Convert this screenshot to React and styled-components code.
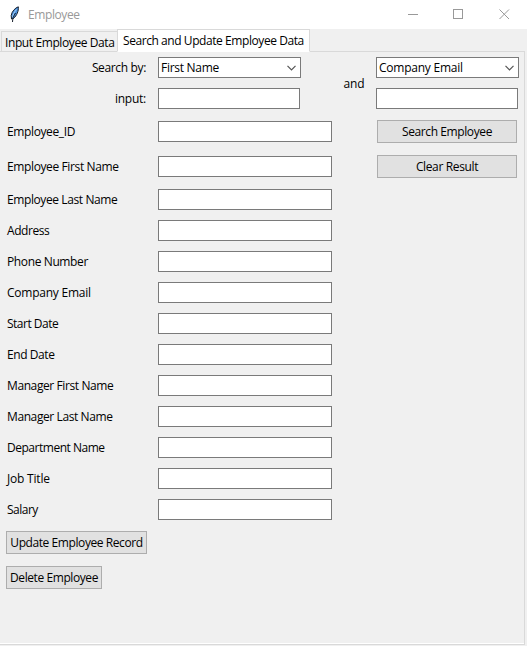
import React from "react";
import styled, { createGlobalStyle } from "styled-components";

const GlobalStyle = createGlobalStyle`
  * { box-sizing: border-box; }
  body {
    margin: 0;
    background: #f0f0f0;
    color: #000;
    font: 12px/16px "Open Sans", "Noto Sans", sans-serif;
    letter-spacing: -0.2px;
  }
`;

const Window = styled.div`
  display: flex;
  flex-direction: column;
  width: 527px;
  height: 646px;
  background: #f0f0f0;
  overflow: hidden;
`;

const TitleBar = styled.header`
  display: flex;
  align-items: center;
  flex: 0 0 29px;
  padding-left: 8px;
  background: #fff;
`;

const Title = styled.span`
  flex: 1;
  margin-left: 7px;
  color: #999;
  letter-spacing: ${(p) => p.$tracking || 0}px;
`;

const WindowControls = styled.div`
  display: flex;
  height: 26px;
`;

const ControlButton = styled.button`
  display: flex;
  align-items: center;
  justify-content: center;
  width: 45.5px;
  padding: 0;
  border: 0;
  background: transparent;
`;

const TabStrip = styled.nav`
  display: flex;
  align-items: flex-end;
  flex: 0 0 23px;
  padding-left: 1px;
  box-shadow: inset -2px 0 #f0f0f0, inset 0 -1px #d9d9d9;
`;

const Tab = styled.button`
  width: ${(p) => p.$width}px;
  height: ${(p) => (p.$active ? 23 : 21)}px;
  padding: ${(p) => (p.$active ? "0 0 0 5px" : "2px 0 0 3px")};
  border: 1px solid #d9d9d9;
  border-bottom-color: ${(p) => (p.$active ? "#fff" : "#d9d9d9")};
  border-right-width: ${(p) => (p.$active ? 1 : 0)}px;
  background: ${(p) => (p.$active ? "#fff" : "#f0f0f0")};
  color: inherit;
  font: inherit;
  letter-spacing: ${(p) => p.$tracking}px;
  text-align: left;
  white-space: nowrap;
`;

const Pane = styled.main`
  width: 525px;
  height: 593px;
  flex: none;
  border-right: 1px solid #d9d9d9;
  border-bottom: 1px solid #d9d9d9;
  box-shadow: inset 0 -1px #fff;
`;

const Form = styled.form`
  display: grid;
  grid-template-columns: 158px 174px 44px 148px;
  grid-template-rows: 31px 31px 35px 35px repeat(11, 31px) 35px 35px;
  align-items: center;
`;

const Label = styled.label`
  grid-column: 1;
  grid-row: ${(p) => p.$row};
  padding: 0 12px 0 7px;
  text-align: ${(p) => (p.$right ? "right" : "left")};
  letter-spacing: ${(p) => p.$tracking}px;
  white-space: nowrap;
`;

const Joiner = styled.span`
  grid-column: 3;
  grid-row: 1 / span 2;
  padding-top: 1px;
  text-align: center;
`;

const Entry = styled.input`
  grid-column: ${(p) => p.$col || 2};
  grid-row: ${(p) => p.$row};
  width: ${(p) => p.$width || 174}px;
  height: 21px;
  padding: 0 2px;
  border: 1px solid #7a7a7a;
  border-radius: 0;
  outline: 0;
  background: #fff;
  font: inherit;
`;

const Combo = styled.div`
  grid-column: ${(p) => p.$col};
  grid-row: 1;
  display: flex;
  align-items: center;
  justify-content: space-between;
  width: 143px;
  height: 21px;
  padding: 0 4px 0 2px;
  border: 1px solid #7a7a7a;
  background: #fff;
  letter-spacing: ${(p) => p.$tracking}px;
`;

const Button = styled.button`
  grid-column: ${(p) => p.$col || 1};
  grid-row: ${(p) => p.$row};
  width: ${(p) => p.$width}px;
  height: 23px;
  margin-left: ${(p) => (p.$col ? 1 : 6)}px;
  padding: 0;
  border: 1px solid #adadad;
  background: #e1e1e1;
  color: inherit;
  font: inherit;
  letter-spacing: ${(p) => p.$tracking}px;
  white-space: nowrap;
`;

const Feather = () => (
  <svg width="13" height="18" viewBox="0 0 13 18">
    <path d="M10.300 .8 C7 2 3.800 5.500 3.200 9.500 L3.500 13 L5.500 12.500 C8.800 9.500 10.800 5 10.300 .8Z" fill="#4a90dc" stroke="#18202c" strokeWidth="1" />
    <path d="M8.500 3.500 C6.300 6 5 8.500 4.700 11" fill="none" stroke="#a5d0f8" strokeWidth="1" />
    <path d="M7.500 7 C5.500 10 4.500 13 4.500 16" fill="none" stroke="#18202c" strokeWidth="1" />
  </svg>
);

const Chevron = () => (
  <svg width="9" height="6" viewBox="0 0 9 6">
    <path d="M.5 .8 4.500 4.800 8.500 .8" fill="none" stroke="#555" strokeWidth="1.2" />
  </svg>
);

const fields = [
  ["Employee_ID", -0.38],
  ["Employee First Name", -0.38],
  ["Employee Last Name", -0.4],
  ["Address", -0.42],
  ["Phone Number", -0.38],
  ["Company Email", -0.24],
  ["Start Date", -0.5],
  ["End Date", -0.42],
  ["Manager First Name", -0.4],
  ["Manager Last Name", -0.4],
  ["Department Name", -0.48],
  ["Job Title", -0.2],
  ["Salary", -0.5],
];

export default function App() {
  return (
    <>
      <GlobalStyle />
      <Window>
        <TitleBar>
          <Feather />
          <Title $tracking={-0.4}>Employee</Title>
          <WindowControls>
            <ControlButton aria-label="Minimize">
              <svg width="11" height="11"><path d="M0 5.500H10" stroke="#999" /></svg>
            </ControlButton>
            <ControlButton aria-label="Maximize">
              <svg width="11" height="11"><rect x=".5" y=".5" width="9" height="9" fill="none" stroke="#999" /></svg>
            </ControlButton>
            <ControlButton aria-label="Close">
              <svg width="11" height="11"><path d="M.5 .5 10 10M10 .5 .5 10" stroke="#999" /></svg>
            </ControlButton>
          </WindowControls>
        </TitleBar>
        <TabStrip>
          <Tab $width={116} $tracking={-0.4}>Input Employee Data</Tab>
          <Tab $active $width={193} $tracking={-0.43}>Search and Update Employee Data</Tab>
        </TabStrip>
        <Pane>
          <Form>
            <Label $row={1} $right $tracking={-0.35}>Search by:</Label>
            <Combo $col={2} $tracking={-0.28}>First Name<Chevron /></Combo>
            <Joiner>and</Joiner>
            <Combo $col={4} $tracking={-0.24}>Company Email<Chevron /></Combo>
            <Label $row={2} $right $tracking={-0.25}>input:</Label>
            <Entry $row={2} $width={142} />
            <Entry $row={2} $col={4} $width={142} />
            {fields.map(([name, tracking], i) => (
              <React.Fragment key={name}>
                <Label $row={i + 3} $tracking={tracking} htmlFor={name}>{name}</Label>
                <Entry $row={i + 3} id={name} />
              </React.Fragment>
            ))}
            <Button type="button" $row={3} $col={4} $width={140} $tracking={-0.4}>Search Employee</Button>
            <Button type="button" $row={4} $col={4} $width={140} $tracking={-0.36}>Clear Result</Button>
            <Button type="button" $row={16} $width={141} $tracking={-0.42}>Update Employee Record</Button>
            <Button type="button" $row={17} $width={96} $tracking={-0.42}>Delete Employee</Button>
          </Form>
        </Pane>
      </Window>
    </>
  );
}
